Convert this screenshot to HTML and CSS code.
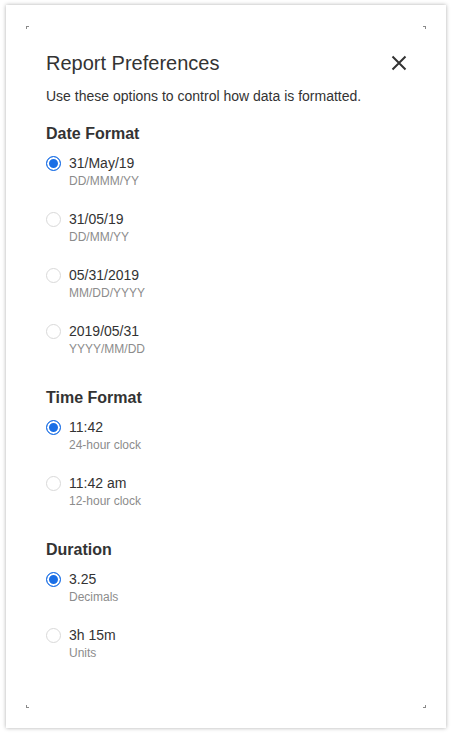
FILE: index.html
```html
<!DOCTYPE html>
<html>
<head>
<meta charset="utf-8">
<link rel="stylesheet" href="styles.css">
</head>
<body>
<div class="card">
  <span class="mark mark-tl"></span>
  <span class="mark mark-tr"></span>
  <span class="mark mark-bl"></span>
  <span class="mark mark-br"></span>
  <div class="header">
    <h1 class="title">Report Preferences</h1>
    <button class="close" aria-label="Close">
      <svg width="16" height="16" viewBox="0 0 16 16"><path d="M1.5 1.5 L14.5 14.5 M14.5 1.5 L1.5 14.5" stroke="#333" stroke-width="2" fill="none" stroke-linecap="butt"/></svg>
    </button>
  </div>
  <p class="intro">Use these options to control how data is formatted.</p>

  <section class="group">
    <h2 class="heading">Date Format</h2>
    <div class="option"><span class="radio checked"></span><div class="texts"><div class="label">31/May/19</div><div class="sub">DD/MMM/YY</div></div></div>
    <div class="option"><span class="radio"></span><div class="texts"><div class="label">31/05/19</div><div class="sub">DD/MM/YY</div></div></div>
    <div class="option"><span class="radio"></span><div class="texts"><div class="label">05/31/2019</div><div class="sub">MM/DD/YYYY</div></div></div>
    <div class="option"><span class="radio"></span><div class="texts"><div class="label">2019/05/31</div><div class="sub">YYYY/MM/DD</div></div></div>
  </section>

  <section class="group">
    <h2 class="heading">Time Format</h2>
    <div class="option"><span class="radio checked"></span><div class="texts"><div class="label">11:42</div><div class="sub">24-hour clock</div></div></div>
    <div class="option"><span class="radio"></span><div class="texts"><div class="label">11:42 am</div><div class="sub">12-hour clock</div></div></div>
  </section>

  <section class="group">
    <h2 class="heading">Duration</h2>
    <div class="option"><span class="radio checked"></span><div class="texts"><div class="label">3.25</div><div class="sub">Decimals</div></div></div>
    <div class="option"><span class="radio"></span><div class="texts"><div class="label">3h 15m</div><div class="sub">Units</div></div></div>
  </section>
</div>
</body>
</html>
```

FILE: styles.css
```css
* { box-sizing: border-box; }
html, body {
  margin: 0;
  padding: 0;
  background: #ffffff;
}
body {
  font-family: "Liberation Sans", Arial, sans-serif;
  color: #333;
  padding: 5px 6px 6px 6px;
}
.card {
  position: relative;
  width: 440px;
  height: 723px;
  background: #fff;
  box-shadow: 0 0 4px rgba(0, 0, 0, 0.32);
  padding: 46px 40px 0 40px;
}
.mark {
  position: absolute;
  width: 3px;
  height: 3px;
  border-color: #8a8a8a;
  border-style: solid;
  border-width: 0;
}
.mark-tl { left: 20px; top: 21px; border-left-width: 1px; border-top-width: 1px; }
.mark-tr { right: 20px; top: 21px; border-right-width: 1px; border-top-width: 1px; }
.mark-bl { left: 20px; bottom: 20px; border-left-width: 1px; border-bottom-width: 1px; }
.mark-br { right: 20px; bottom: 20px; border-right-width: 1px; border-bottom-width: 1px; }

.header {
  display: flex;
  justify-content: space-between;
  align-items: center;
  height: 24px;
}
.title {
  margin: 0;
  font-size: 20px;
  line-height: 24px;
  font-weight: normal;
  color: #333;
}
.close {
  border: 0;
  background: none;
  padding: 0;
  width: 16px;
  height: 16px;
  display: flex;
  margin-right: -1px;
}
.intro {
  margin: 11px 0 0 0;
  font-size: 14px;
  line-height: 20px;
  color: #333;
}
.group {
  margin-top: 18px;
}
.group + .group {
  margin-top: 31px;
}
.heading {
  margin: 0 0 10px 0;
  font-size: 16px;
  line-height: 20px;
  font-weight: bold;
  color: #333;
}
.option {
  display: flex;
  align-items: flex-start;
  gap: 9px;
}
.option + .option {
  margin-top: 21px;
}
.radio {
  flex: none;
  width: 15px;
  height: 15px;
  margin-top: 1.5px;
  margin-right: -1px;
  border-radius: 50%;
  border: 1px solid #d9d9d9;
  background: #fff;
}
.radio.checked {
  border-color: #1a6fe6;
  background: #1a6fe6;
  box-shadow: inset 0 0 0 2px #fff;
}
.label {
  font-size: 14px;
  line-height: 18px;
  color: #333;
}
.sub {
  margin-top: 1px;
  font-size: 12px;
  line-height: 16px;
  color: #8c8c8c;
}
```
